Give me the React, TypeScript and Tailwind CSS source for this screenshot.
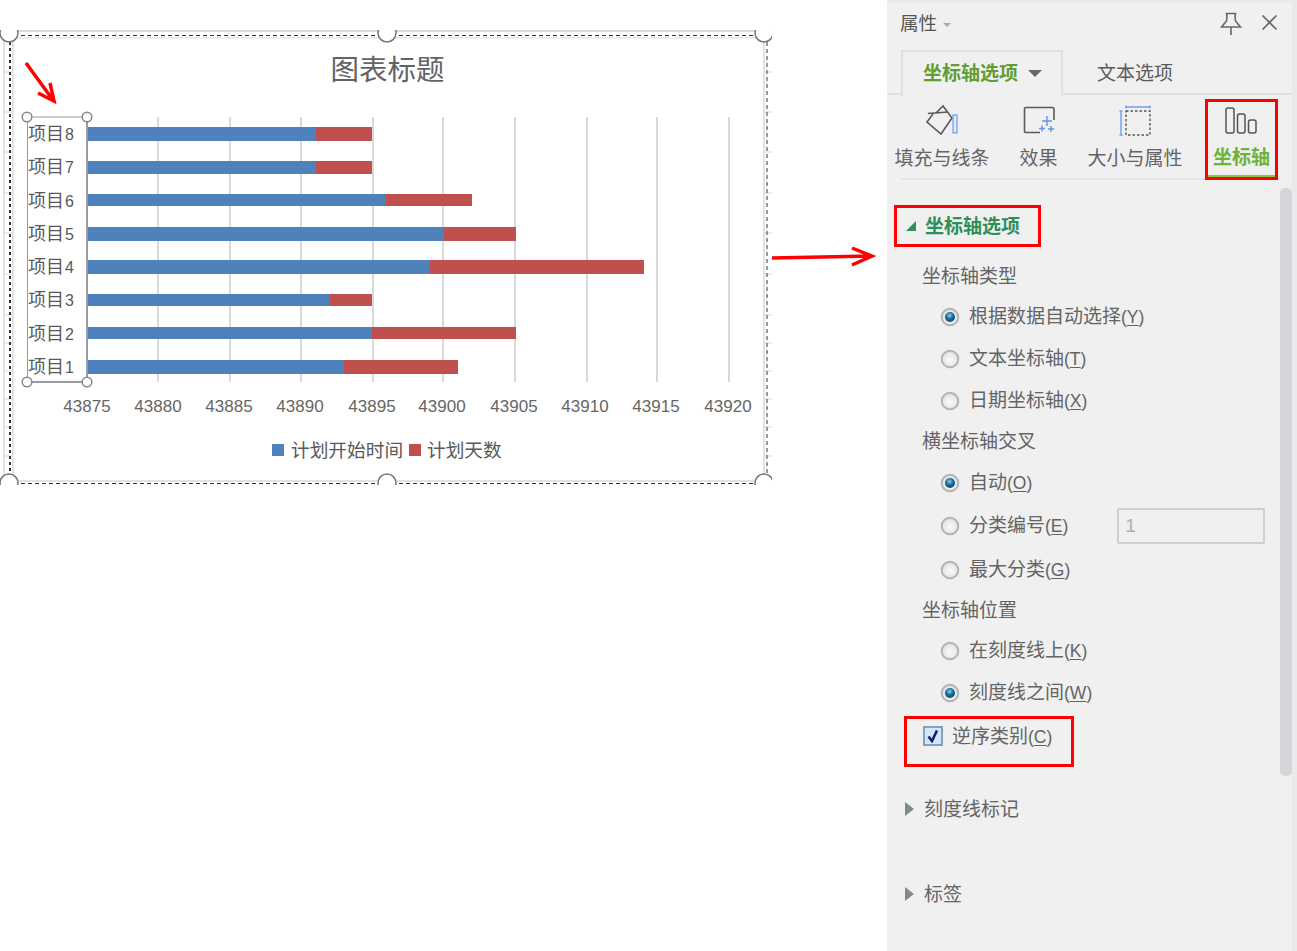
import React from "react";

const bars = [
  { label: "8", top: 127, h: 14, blue: 316, red: 372, textY: 140 },
  { label: "7", top: 161, h: 13, blue: 316, red: 372, textY: 173 },
  { label: "6", top: 194, h: 12, blue: 386, red: 472, textY: 207 },
  { label: "5", top: 227, h: 14, blue: 444, red: 516, textY: 240 },
  { label: "4", top: 260, h: 14, blue: 430, red: 644, textY: 273 },
  { label: "3", top: 294, h: 12, blue: 330, red: 372, textY: 306 },
  { label: "2", top: 327, h: 12, blue: 372, red: 516, textY: 340 },
  { label: "1", top: 360, h: 14, blue: 344, red: 458, textY: 373 },
];

const gridLines = [158, 230, 301, 373, 443, 515, 587, 657, 729];
const axisLabels = [
  [87, "43875"],
  [158, "43880"],
  [229, "43885"],
  [300, "43890"],
  [372, "43895"],
  [442, "43900"],
  [514, "43905"],
  [585, "43910"],
  [656, "43915"],
  [728, "43920"],
] as const;
const topTicks = [116, 229, 341, 454, 566, 679];
const sideTicks = [72, 112, 152, 193, 233, 274, 315, 343, 371, 399, 427, 456];
const frameHandles = [
  [9, 33],
  [387, 33],
  [764, 33],
  [9, 483],
  [387, 483],
  [764, 483],
];
const axisHandles = [
  [27, 117],
  [87, 117],
  [27, 382],
  [87, 382],
];

const Chart = () => (
  <svg width="887" height="490" viewBox="0 0 887 490" className="block">
    <defs>
      <clipPath id="frame-clip">
        <rect x="0" y="30" width="772" height="455" />
      </clipPath>
    </defs>

    {/* selection frame */}
    <g stroke="#d9d9d9" fill="none">
      <path d="M0 31H772" strokeWidth="2" />
      <path d="M12 38H764" />
      <path d="M12 481H764" strokeWidth="1.5" />
      <path d="M4 31V481M13 38V481" strokeWidth="1.5" />
      <path d="M764 31V481" strokeWidth="1.5" />
      {topTicks.map((x) => (
        <path key={x} d={`M${x} 30V38M${x} 481V485`} />
      ))}
      {sideTicks.map((y) => (
        <path key={y} d={`M4 ${y}H13M764 ${y}H772`} />
      ))}
    </g>
    <g stroke="#333" fill="none">
      <path d="M14 35.500H760" strokeDasharray="4 3" />
      <path d="M14 483.500H760" strokeDasharray="4 3" />
      <path d="M10 42V476" strokeWidth="2" strokeDasharray="3 3" />
      <path d="M767 42V476" strokeDasharray="4 3" />
    </g>
    <g clipPath="url(#frame-clip)">
      {frameHandles.map(([x, y]) => (
        <circle key={`${x}-${y}`} cx={x} cy={y} r="9" fill="#fff" stroke="#777" strokeWidth="1.500" />
      ))}
    </g>

    <text x="387.500" y="80" textAnchor="middle" fontSize="28.500" fill="#636363">
      图表标题
    </text>

    {gridLines.map((x) => (
      <rect key={x} x={x - 1} y="117" width="2" height="265" fill="#d9d9d9" />
    ))}

    {bars.map((b) => (
      <g key={b.label}>
        <rect x="88" y={b.top} width={b.blue - 88} height={b.h} fill="#4f81bd" />
        <rect x={b.blue} y={b.top} width={b.red - b.blue} height={b.h} fill="#c0504d" />
        <text x="28" y={b.textY} fontSize="18" fill="#595959">
          项目
          <tspan fontSize="16" dx="1">
            {b.label}
          </tspan>
        </text>
      </g>
    ))}

    {/* selected category axis */}
    <path d="M27.500 382V117H87" fill="none" stroke="#9a9aa5" />
    <path d="M87 117V382H27" fill="none" stroke="#9a9aa5" strokeWidth="2" />
    {axisHandles.map(([x, y]) => (
      <circle key={`${x}-${y}`} cx={x} cy={y} r="4.800" fill="#fff" stroke="#888" strokeWidth="1.500" />
    ))}

    {axisLabels.map(([x, text]) => (
      <text key={text} x={x} y="412" textAnchor="middle" fontSize="17" fill="#666">
        {text}
      </text>
    ))}

    <rect x="272" y="444" width="12" height="12" fill="#4f81bd" />
    <text x="291" y="457" fontSize="18.700" fill="#595959">
      计划开始时间
    </text>
    <rect x="409" y="444" width="12" height="12" fill="#c0504d" />
    <text x="427" y="457" fontSize="18.700" fill="#595959">
      计划天数
    </text>

    {/* annotation arrows */}
    <g stroke="#ff0000" fill="none" strokeWidth="3.500">
      <path d="M26 63L53 100M38 93L54 101L50 83" />
      <path d="M772 258L871 256M852 248L872 256L852 265" />
    </g>
  </svg>
);

const Radio = ({ on }: { on?: boolean }) => (
  <svg width="20" height="20" viewBox="0 0 20 20" className="shrink-0">
    <defs>
      <radialGradient id="radio-off" cx="50%" cy="55%" r="55%">
        <stop offset="0%" stopColor="#fbfbfb" />
        <stop offset="70%" stopColor="#e8e8e8" />
        <stop offset="100%" stopColor="#cfcfcf" />
      </radialGradient>
      <radialGradient id="radio-on" cx="45%" cy="35%" r="60%">
        <stop offset="0%" stopColor="#8fd0f0" />
        <stop offset="55%" stopColor="#1c6fa0" />
        <stop offset="100%" stopColor="#0d4a73" />
      </radialGradient>
    </defs>
    <circle cx="10" cy="10" r="8.300" fill="url(#radio-off)" stroke="#b4b4b4" strokeWidth="2" />
    {on && <circle cx="10" cy="10" r="5" fill="url(#radio-on)" />}
  </svg>
);

const Accel = ({ children }: { children: string }) => (
  <span className="text-[17.500px]">
    (<span className="underline underline-offset-2">{children}</span>)
  </span>
);

const RadioRow = ({
  label,
  accel,
  on,
  className,
  children,
}: {
  label: string;
  accel: string;
  on?: boolean;
  className: string;
  children?: React.ReactNode;
}) => (
  <div className={`flex h-[30px] items-center pl-[53px] ${className}`}>
    <Radio on={on} />
    <span className="ml-[9px] whitespace-nowrap">
      {label}
      <Accel>{accel}</Accel>
    </span>
    {children}
  </div>
);

const FillIcon = () => (
  <svg width="32" height="32" viewBox="0 0 32 32" fill="none">
    <path d="M10 9L17 2L26 14L15 30L1 18L7 10" stroke="#5a5a5a" strokeWidth="1.600" />
    <path d="M2 9.500L22 8" stroke="#5a5a5a" strokeWidth="1.400" />
    <rect x="27" y="11" width="4" height="18" fill="#dfe9fb" stroke="#6d9eeb" strokeWidth="1.200" />
  </svg>
);

const EffectIcon = () => (
  <svg width="32" height="32" viewBox="0 -2 32 32" fill="none">
    <path d="M17 26.500H3a1.500 1.500 0 0 1-1.500-1.500V3A1.500 1.500 0 0 1 3 1.500H29.500A1.500 1.500 0 0 1 31 3V14" stroke="#5a5a5a" strokeWidth="1.600" />
    <path d="M24 10V20M19 15H29M19 19.500V25.500M16 22.500H22M28 20V26M25 23H31" stroke="#5f93e8" strokeWidth="1.400" />
  </svg>
);

const SizeIcon = () => (
  <svg width="32" height="32" viewBox="0 0 32 32" fill="none">
    <rect x="7" y="7" width="24" height="24" stroke="#555" strokeWidth="1.400" strokeDasharray="2.500 2" />
    <path d="M7 3H31M7 1.500V4.500M31 1.500V4.500M2 7V31M.5 7H3.500M.5 31H3.500" stroke="#6d9eeb" strokeWidth="1.400" />
  </svg>
);

const AxisIcon = () => (
  <svg width="33" height="27" viewBox="0 0 33 27" fill="none" stroke="#555" strokeWidth="1.500">
    <rect x="1" y="1" width="8" height="25" rx="2" />
    <rect x="12.500" y="7" width="7.500" height="19" rx="2" />
    <rect x="23.500" y="13" width="7.500" height="13" rx="2" />
  </svg>
);

const PropertiesPanel = () => (
  <aside className="relative h-[951px] w-[410px] shrink-0 border-r-[5px] border-[#e9e9e9] bg-[#f0f0f0] text-[19px] leading-none text-[#646464]">
    {/* scrollbar */}
    <div className="absolute top-[188px] left-[393px] h-[588px] w-[12px] rounded-[5px] bg-[#d3d5da]" />

    <div className="h-[3px] bg-gradient-to-b from-[#e6e6e6] to-[#f0f0f0]" />
    <header className="flex h-[47px] items-center pb-[5px] pl-[13px]">
      <span className="text-[18.500px] text-[#555]">属性</span>
      <span className="mt-[2px] ml-[6px] h-0 w-0 border-x-[4px] border-t-[4px] border-x-transparent border-t-[#aaa]" />
      <svg width="22" height="24" viewBox="0 0 22 24" fill="none" stroke="#666" strokeWidth="1.600" className="mt-[-1px] ml-[269px]">
        <path d="M6.500 1.500H15.500L15 4L15.500 9L20.500 15H1.500L6.500 9L7 4ZM11 15V23" />
      </svg>
      <svg width="17" height="15" viewBox="0 0 17 15" fill="none" stroke="#666" strokeWidth="1.600" className="mt-[-4px] ml-[19px]">
        <path d="M1.500 .5L15.500 14.500M15.500 .5L1.500 14.500" />
      </svg>
    </header>

    <div className="flex h-[45px] border-b-2 border-[#e0e0e0]">
      <div className="z-10 mb-[-2px] ml-[14px] flex h-[46px] w-[162px] items-center border-x-2 border-t-2 border-[#e0e0e0] bg-[#f0f0f0] pb-[2px] pl-[20px] font-bold text-[#5f9e32]">
        坐标轴选项
        <span className="ml-[10px] h-0 w-0 border-x-[7px] border-t-[7px] border-x-transparent border-t-[#666]" />
      </div>
      <div className="ml-[34px] flex items-center pt-[4px] text-[#5a5a5a]">文本选项</div>
    </div>

    <div className="mt-[4px] flex h-[81px] items-start pl-[8px]">
      <button className="flex w-[94px] flex-col items-center">
        <span className="mt-[4px] flex h-[34px] items-center">
          <FillIcon />
        </span>
        <span className="mt-[12px] whitespace-nowrap">填充与线条</span>
      </button>
      <button className="ml-[30px] flex w-[39px] flex-col items-center">
        <span className="mt-[4px] flex h-[34px] items-center">
          <EffectIcon />
        </span>
        <span className="mt-[12px] whitespace-nowrap">效果</span>
      </button>
      <button className="ml-[30px] flex w-[94px] flex-col items-center">
        <span className="mt-[4px] flex h-[34px] items-center">
          <SizeIcon />
        </span>
        <span className="mt-[12px] whitespace-nowrap">大小与属性</span>
      </button>
      <button className="relative z-10 ml-[23px] flex h-[81px] w-[73px] flex-col items-center border-[3px] border-[#ff0000] pt-[5px]">
        <AxisIcon />
        <span className="mt-[14px] font-bold whitespace-nowrap text-[#6cb33a]">坐标轴</span>
        <span className="absolute right-0 bottom-0 left-0 h-[2px] bg-[#8cc63f]" />
      </button>
    </div>
    <div className="mt-[-2px] ml-[14px] h-[2px] w-[305px] bg-[#e6e6e6]" />

    <div className="mt-[25px] ml-[7px] flex h-[42px] w-[147px] items-center border-[3px] border-[#ff0000] pl-[9px] font-bold text-[#2f8f5b]">
      <span className="h-0 w-0 border-b-[10px] border-l-[10px] border-b-[#2f8f5b] border-l-transparent" />
      <span className="ml-[9px]">坐标轴选项</span>
    </div>

    <div className="mt-[14px] flex h-[30px] items-center pl-[35px]">坐标轴类型</div>
    <RadioRow label="根据数据自动选择" accel="Y" on className="mt-[11px]" />
    <RadioRow label="文本坐标轴" accel="T" className="mt-[12px]" />
    <RadioRow label="日期坐标轴" accel="X" className="mt-[12px]" />
    <div className="mt-[10px] flex h-[30px] items-center pl-[35px]">横坐标轴交叉</div>
    <RadioRow label="自动" accel="O" on className="mt-[12px]" />
    <RadioRow label="分类编号" accel="E" className="mt-[13px]">
      <input
        readOnly
        value="1"
        className="ml-[49px] h-[36px] w-[148px] rounded-[2px] border-2 border-[#cfcfcf] bg-[#f0f0f0] pl-[6px] text-[19px] text-[#b0b0b0] outline-none"
      />
    </RadioRow>
    <RadioRow label="最大分类" accel="G" className="mt-[14px]" />
    <div className="mt-[10px] flex h-[30px] items-center pl-[35px]">坐标轴位置</div>
    <RadioRow label="在刻度线上" accel="K" className="mt-[11px]" />
    <RadioRow label="刻度线之间" accel="W" on className="mt-[12px]" />

    <div className="mt-[8px] ml-[17px] flex h-[51px] w-[170px] items-start border-[3px] border-[#ff0000] pt-[7px] pl-[16px]">
      <span className="flex h-[20px] w-[20px] shrink-0 items-center justify-center border-2 border-[#8aa0b8] bg-[#cfe6fb]">
        <svg width="14" height="14" viewBox="0 0 14 14" fill="none" stroke="#14206e" strokeWidth="2.600">
          <path d="M2.500 7.500L6 12L11 1.500" />
        </svg>
      </span>
      <span className="mt-[1px] ml-[9px] whitespace-nowrap">
        逆序类别
        <Accel>C</Accel>
      </span>
    </div>

    <div className="mt-[27px] flex h-[30px] items-center pl-[18px]">
      <span className="h-0 w-0 border-y-[7px] border-l-[9px] border-y-transparent border-l-[#7f8a8a]" />
      <span className="ml-[10px]">刻度线标记</span>
    </div>
    <div className="mt-[55px] flex h-[30px] items-center pl-[18px]">
      <span className="h-0 w-0 border-y-[7px] border-l-[9px] border-y-transparent border-l-[#7f8a8a]" />
      <span className="ml-[10px]">标签</span>
    </div>
  </aside>
);

export default function App() {
  return (
    <div className="flex h-[951px] w-[1297px] items-start overflow-hidden bg-white [font-family:'Liberation_Sans','Noto_Sans_CJK_SC',sans-serif]">
      <main className="w-[887px] shrink-0">
        <Chart />
      </main>
      <PropertiesPanel />
    </div>
  );
}
